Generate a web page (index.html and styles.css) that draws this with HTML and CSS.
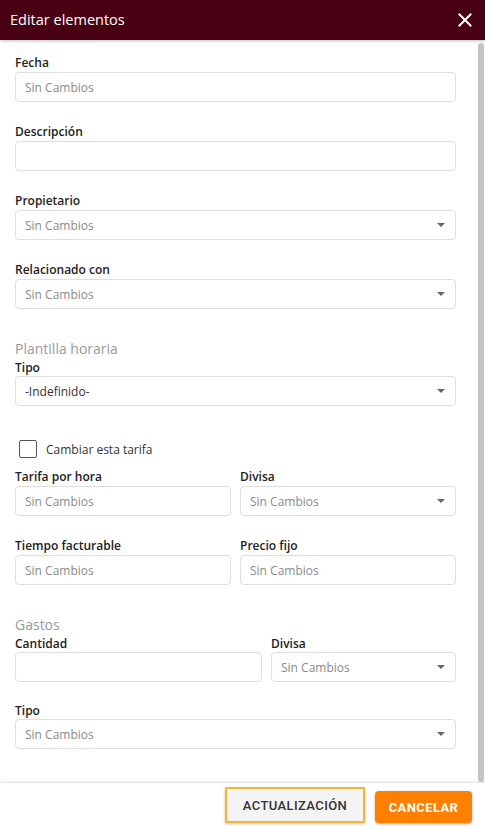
FILE: index.html
```html
<!DOCTYPE html>
<html lang="es">
<head>
<meta charset="utf-8">
<title>Editar elementos</title>
<link rel="stylesheet" href="styles.css">
</head>
<body>
<div class="dialog">
  <header class="dlg-head">
    <h1 class="dlg-title">Editar elementos</h1>
    <button class="close" aria-label="Cerrar">
      <svg width="14" height="14" viewBox="0 0 14 14"><path d="M1.5 1.5 L12.5 12.5 M12.5 1.5 L1.5 12.5" stroke="#fff" stroke-width="2" stroke-linecap="square"/></svg>
    </button>
  </header>
  <div class="dlg-body">
    <div class="content">
      <div class="group">
        <label class="lbl">Fecha</label>
        <div class="field"><span class="ph">Sin Cambios</span></div>
      </div>
      <div class="group">
        <label class="lbl">Descripción</label>
        <div class="field"></div>
      </div>
      <div class="group">
        <label class="lbl">Propietario</label>
        <div class="field select"><span class="ph">Sin Cambios</span><span class="caret"></span></div>
      </div>
      <div class="group">
        <label class="lbl">Relacionado con</label>
        <div class="field select"><span class="ph">Sin Cambios</span><span class="caret"></span></div>
      </div>

      <h2 class="section">Plantilla horaria</h2>
      <div class="group">
        <label class="lbl tight">Tipo</label>
        <div class="field select"><span class="val">-Indefinido-</span><span class="caret"></span></div>
      </div>

      <div class="check-row">
        <span class="checkbox"></span>
        <span class="check-lbl">Cambiar esta tarifa</span>
      </div>

      <div class="row half">
        <div class="group">
          <label class="lbl">Tarifa por hora</label>
          <div class="field"><span class="ph">Sin Cambios</span></div>
        </div>
        <div class="group">
          <label class="lbl">Divisa</label>
          <div class="field select"><span class="ph">Sin Cambios</span><span class="caret"></span></div>
        </div>
      </div>
      <div class="row half">
        <div class="group">
          <label class="lbl">Tiempo facturable</label>
          <div class="field"><span class="ph">Sin Cambios</span></div>
        </div>
        <div class="group">
          <label class="lbl">Precio fijo</label>
          <div class="field"><span class="ph">Sin Cambios</span></div>
        </div>
      </div>

      <h2 class="section">Gastos</h2>
      <div class="row gastos">
        <div class="group">
          <label class="lbl tight">Cantidad</label>
          <div class="field"></div>
        </div>
        <div class="group">
          <label class="lbl tight">Divisa</label>
          <div class="field select"><span class="ph">Sin Cambios</span><span class="caret"></span></div>
        </div>
      </div>
      <div class="group">
        <label class="lbl tight">Tipo</label>
        <div class="field select"><span class="ph">Sin Cambios</span><span class="caret"></span></div>
      </div>
    </div>
    <div class="scrollbar"><div class="thumb"></div></div>
  </div>
  <footer class="dlg-foot">
    <button class="btn btn-update">ACTUALIZACIÓN</button>
    <button class="btn btn-cancel">CANCELAR</button>
  </footer>
</div>
</body>
</html>
```

FILE: styles.css
```css
* { box-sizing: border-box; }
html, body { margin: 0; padding: 0; }
body {
  width: 485px;
  height: 829px;
  overflow: hidden;
  background: #fff;
  font-family: "Open Sans", "Noto Sans", sans-serif;
  color: #222;
}
.dialog {
  display: flex;
  flex-direction: column;
  height: 829px;
}
.dlg-head {
  height: 40px;
  flex: none;
  background: #4a0013;
  display: flex;
  align-items: center;
  justify-content: space-between;
  padding: 0 13px 0 10px;
  box-shadow: 0 1px 3px rgba(0,0,0,0.25);
  position: relative;
  z-index: 1;
}
.dlg-title {
  margin: 0;
  font-size: 14.5px;
  font-weight: 400;
  color: #fff;
  line-height: 20px;
}
.close {
  border: 0;
  background: none;
  padding: 0;
  width: 14px;
  height: 14px;
  display: flex;
}
.dlg-body {
  flex: none;
  height: 742px;
  display: flex;
  background: #fff;
}
.content {
  flex: 1;
  padding: 13px 21px 0 15px;
}
.scrollbar {
  width: 8px;
  flex: none;
  padding: 3px 1px 0 1px;
}
.thumb {
  width: 6px;
  height: 739px;
  background: #c4c4c4;
  border-radius: 3px;
}
.group {
  margin-bottom: 20px;
}
.lbl {
  display: block;
  font-size: 12px;
  font-weight: 600;
  color: #222;
  line-height: 19px;
}
.lbl.tight { line-height: 17px; }
.field {
  height: 30px;
  border: 1px solid #dedede;
  border-radius: 4px;
  display: flex;
  align-items: center;
  padding: 0 9px;
  font-size: 12px;
  background: #fff;
}
.ph { color: #8a8a8a; }
.val { color: #333; }
.select { justify-content: space-between; padding-right: 10px; }
.caret {
  width: 0;
  height: 0;
  border-left: 4.5px solid transparent;
  border-right: 4.5px solid transparent;
  border-top: 4.5px solid #666;
}
.section {
  margin: 0;
  padding-top: 10px;
  font-size: 14px;
  font-weight: 400;
  color: #9a9a9a;
  line-height: 20px;
}
.check-row {
  display: flex;
  align-items: center;
  gap: 9px;
  margin: 34px 0 9px 4px;
  height: 18px;
}
.checkbox {
  width: 18px;
  height: 18px;
  border: 1.5px solid #555;
  border-radius: 2px;
  background: #fff;
}
.check-lbl {
  font-size: 12px;
  color: #333;
}
.row {
  display: grid;
  column-gap: 9px;
}
.row.half { grid-template-columns: 1fr 1fr; }
.row.gastos { grid-template-columns: 247px 1fr; }
.dlg-foot {
  flex: 1;
  border-top: 1px solid #e6e6e6;
  box-shadow: 0 -1px 2px rgba(0,0,0,0.06);
  display: flex;
  justify-content: flex-end;
  align-items: flex-start;
  gap: 10px;
  padding: 4px 13px 0 0;
}
.btn {
  font-family: Roboto, "Liberation Sans", sans-serif;
  font-size: 13px;
  letter-spacing: 0.4px;
  border-radius: 3px;
  cursor: pointer;
}
.btn-update {
  width: 140px;
  height: 36px;
  background: #f4f4f4;
  color: #333;
  font-weight: 500;
  border: 2px solid #f2b632;
  border-radius: 1px;
  box-shadow: 0 1px 3px rgba(0,0,0,0.25);
}
.btn-cancel {
  width: 97px;
  height: 32px;
  background: #ff8000;
  color: #fff;
  font-weight: 700;
  border: 0;
  border-radius: 4px;
  box-shadow: 0 1px 3px rgba(0,0,0,0.3);
  margin-top: 4px;
}
```
